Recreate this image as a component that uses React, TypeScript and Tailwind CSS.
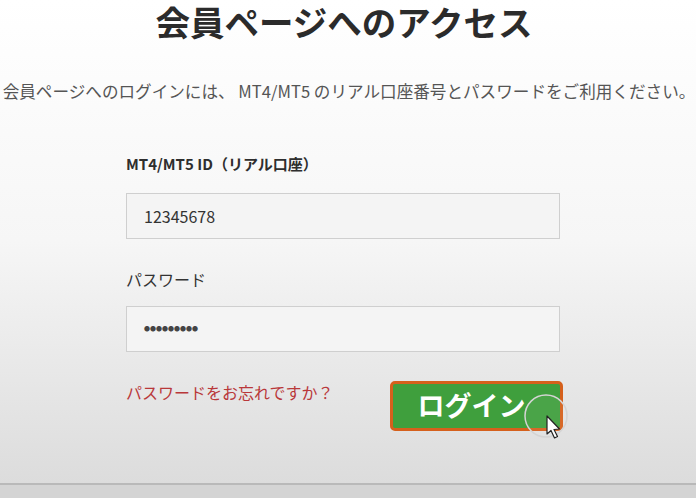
import React from "react";

const jp = { fontFamily: '"Noto Sans CJK JP", "Noto Sans", sans-serif' };

export default function App() {
  return (
    <div
      className="w-[696px] h-[498px] overflow-hidden flex flex-col"
      style={jp}
    >
      <div className="relative h-[483px] bg-gradient-to-b from-[#ffffff] via-[#f6f6f6] to-[#dcdcdc] flex flex-col">
        <h1 className="pt-[1px] text-center text-[34.5px] leading-[40px] font-bold text-[#2b2b2b] whitespace-nowrap pr-[8px]">
          会員ページへのアクセス
        </h1>
        <p className="mt-[40px] text-center whitespace-nowrap text-[16.6px] leading-[20px] text-[#555] pl-[2px]">
          会員ページへのログインには、 MT4/MT5 のリアル口座番号とパスワードをご利用ください。
        </p>
        <div className="ml-[126px] w-[434px] flex flex-col">
          <label className="mt-[53px] leading-[20px] text-[15px] font-bold text-[#2e2e2e]">
            MT4/MT5 ID（リアル口座）
          </label>
          <div className="mt-[19px] h-[46px] border border-[#cfcfcf] bg-[#f4f4f4] flex items-center pl-[17px] text-[16px] text-[#333]">
            12345678
          </div>
          <label className="mt-[30px] leading-[20px] text-[16px] text-[#333]">
            パスワード
          </label>
          <div className="mt-[17px] h-[46px] border border-[#cfcfcf] bg-[#f4f4f4] flex items-center pl-[17px] text-[6px] leading-none text-[#444]">
            ●●●●●●●●●
          </div>
          <div className="mt-[29px] flex items-start">
            <a className="mt-[1px] leading-[20px] text-[16px] text-[#b9383a]">
              パスワードをお忘れですか？
            </a>
            <button className="ml-auto mr-[-3px] w-[173px] h-[50px] rounded-[5px] border-[3px] border-[#d5601c] bg-[#3f9f3d] text-white text-[27px] font-semibold flex items-center justify-center pb-[2px] pr-[10px]">
              ログイン
            </button>
          </div>
        </div>
        <svg
          className="absolute left-[520px] top-[388px]"
          width="52"
          height="56"
          viewBox="0 0 52 56"
        >
          <circle cx="26" cy="28" r="21" fill="rgba(255,255,255,0.06)" stroke="#d4d4d4" strokeWidth="1.5" />
          <path
            d="M27 28 L27 46 L31 42.5 L34.5 50 L37.5 48.5 L34 41.5 L39.5 41 Z"
            fill="#ffffff"
            stroke="#222"
            strokeWidth="1.2"
            strokeLinejoin="round"
          />
        </svg>
      </div>
      <div className="h-[2px] bg-[#b9b9b9]" />
      <div className="flex-1 bg-[#d4d4d4]" />
    </div>
  );
}
